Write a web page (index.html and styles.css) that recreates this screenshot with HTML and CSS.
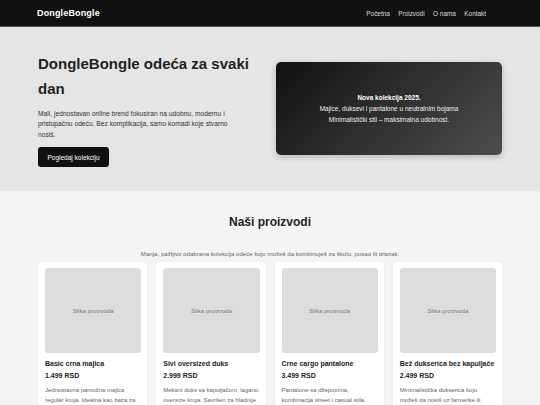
FILE: index.html
```html
<!DOCTYPE html>
<html lang="sr">

<head>
    <meta name="viewport" content="width=device-width">
    <meta charset="utf-8">
    <title>DongleBongle</title>
    <link rel="stylesheet" href="styles.css">
</head>

<body>
    <header class="site-header">
        <div class="logo">DongleBongle</div>
        <nav class="nav">
            <a href="#">Početna</a>
            <a href="#">Proizvodi</a>
            <a href="#">O nama</a>
            <a href="#">Kontakt</a>
        </nav>
    </header>

    <section class="hero">
        <div class="container hero-grid">
            <div class="hero-text">
                <h1>DongleBongle odeća za svaki dan</h1>
                <p>Mali, jednostavan online brend fokusiran na udobnu, modernu i pristupačnu odeću. Bez komplikacija, samo komadi koje stvarno nosiš.</p>
                <a class="btn" href="#">Pogledaj kolekciju</a>
            </div>
            <div class="hero-card">
                <strong>Nova kolekcija 2025.</strong>
                <span>Majice, duksevi i pantalone u neutralnim bojama</span>
                <span>Minimalistički stil – maksimalna udobnost.</span>
            </div>
        </div>
    </section>

    <section class="products">
        <div class="container">
            <h2>Naši proizvodi</h2>
            <p class="subtitle">Manja, pažljivo odabrana kolekcija odeće koju možeš da kombinuješ za školu, posao ili izlazak.</p>
            <div class="product-grid">
                <div class="card">
                    <div class="card-img">Slika proizvoda</div>
                    <h3>Basic crna majica</h3>
                    <div class="price">1.499 RSD</div>
                    <p>Jednostavna pamučna majica regular kroja. Idealna kao baza za svaki outfit.</p>
                </div>
                <div class="card">
                    <div class="card-img">Slika proizvoda</div>
                    <h3>Sivi oversized duks</h3>
                    <div class="price">2.999 RSD</div>
                    <p>Mekani duks sa kapuljačom, lagano oversize kroja. Savršen za hladnije dane.</p>
                </div>
                <div class="card">
                    <div class="card-img">Slika proizvoda</div>
                    <h3>Crne cargo pantalone</h3>
                    <div class="price">3.499 RSD</div>
                    <p>Pantalone sa džepovima, kombinacija street i casual stila.</p>
                </div>
                <div class="card">
                    <div class="card-img">Slika proizvoda</div>
                    <h3>Bež dukserica bez kapuljače</h3>
                    <div class="price">2.499 RSD</div>
                    <p>Minimalistička dukserica koju možeš da nosiš uz farmerke ili trenerku.</p>
                </div>
            </div>
        </div>
    </section>
</body>

</html>
```

FILE: styles.css
```css
* {
    box-sizing: border-box;
}

body {
    font-family: "Liberation Sans", Arial, sans-serif;
    margin: 0;
    padding: 0;
    background-color: #f4f4f4;
    color: #222;
}

.container {
    width: 464px;
    margin: 0 auto;
}

.site-header {
    height: 27px;
    background-color: #111;
    border-bottom: 1px solid #555;
    display: flex;
    align-items: center;
    justify-content: space-between;
    padding: 0 54px 0 37px;
}

.logo {
    color: #fff;
    font-weight: bold;
    font-size: 9px;
    letter-spacing: 0.15px;
}

.nav {
    display: flex;
    gap: 8.5px;
}

.nav a {
    color: #ddd;
    text-decoration: none;
    font-size: 6.4px;
}

.hero {
    background-color: #e5e5e5;
    height: 164px;
    display: flex;
    align-items: center;
}

.hero-grid {
    display: grid;
    grid-template-columns: 1fr 1fr;
    gap: 12px;
    align-items: center;
}

.hero-text h1 {
    font-size: 15px;
    line-height: 25px;
    margin: 0 0 8px;
    color: #222;
}

.hero-text p {
    font-size: 6.7px;
    line-height: 10.7px;
    max-width: 200px;
    margin: 0 0 5px;
    color: #333;
}

.btn {
    display: inline-block;
    background-color: #111;
    color: #fff;
    text-decoration: none;
    font-size: 6.5px;
    padding: 6.5px 9.5px;
    border-radius: 3px;
}

.hero-card {
    height: 93px;
    border-radius: 5px;
    background: linear-gradient(135deg, #111, #4d4d4d);
    box-shadow: 0 2px 6px rgba(0, 0, 0, 0.2);
    color: #eee;
    display: flex;
    flex-direction: column;
    align-items: center;
    justify-content: center;
    font-size: 6.5px;
    line-height: 11px;
    text-align: center;
}

.hero-card strong {
    color: #fff;
}

.products {
    padding: 24px 0 0;
}

.products h2 {
    text-align: center;
    font-size: 12px;
    margin: 0 0 21px;
    color: #222;
}

.subtitle {
    text-align: center;
    font-size: 6.15px;
    color: #666;
    margin: 0 0 5px;
}

.product-grid {
    display: grid;
    grid-template-columns: repeat(4, 1fr);
    gap: 9px;
}

.card {
    background-color: #fff;
    border-radius: 4px;
    padding: 6px 6px 10px 7px;
    box-shadow: 0 1px 3px rgba(0, 0, 0, 0.04);
}

.card-img {
    height: 85px;
    background-color: #ddd;
    border-radius: 3px;
    display: flex;
    align-items: center;
    justify-content: center;
    font-size: 6px;
    color: #777;
    margin-bottom: 6.5px;
}

.card h3 {
    font-size: 7px;
    margin: 0 0 5px;
    color: #222;
}

.price {
    font-size: 7px;
    font-weight: bold;
    margin-bottom: 6px;
    color: #222;
}

.card p {
    font-size: 6px;
    line-height: 10px;
    color: #666;
    margin: 0;
}
```
